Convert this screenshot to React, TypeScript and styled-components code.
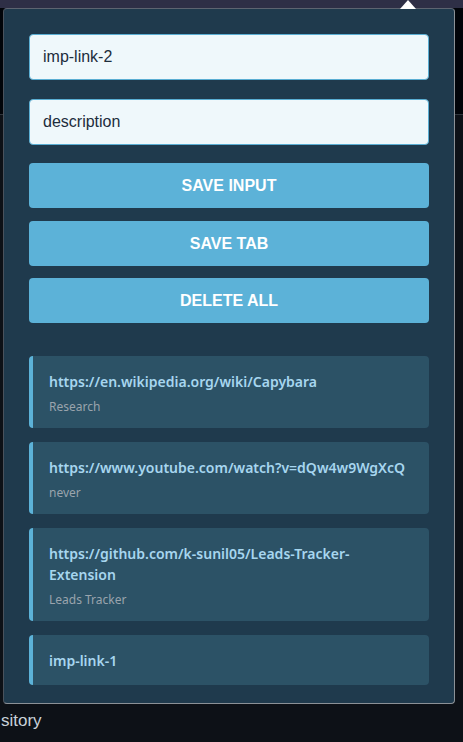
import React from "react";
import styled, { createGlobalStyle } from "styled-components";

const GlobalStyle = createGlobalStyle`
  html, body {
    margin: 0;
    padding: 0;
    background: #0d1117;
    overflow: hidden;
  }
  #root {
    width: 463px;
    height: 742px;
  }
`;

const Page = styled.div`
  position: relative;
  width: 463px;
  height: 742px;
  overflow: hidden;
  display: flex;
  flex-direction: column;
  background: #0d1117;
  font-family: "Liberation Sans", Arial, sans-serif;
`;

const BrowserBar = styled.div`
  height: 8px;
  background: #2e2f46;
  flex-shrink: 0;
`;

const SiteHeader = styled.div`
  height: 106px;
  background: #010409;
  border-bottom: 1px solid #30363d;
  flex-shrink: 0;
`;

const SiteBody = styled.div`
  flex: 1;
  display: flex;
  flex-direction: column;
  justify-content: flex-end;
  padding-bottom: 10px;
`;

const PageText = styled.div`
  margin-left: 1px;
  color: #c9d1d9;
  font-family: "Liberation Sans", Arial, sans-serif;
  font-size: 17px;
  line-height: 22px;
`;

const Popup = styled.div`
  position: absolute;
  top: 8px;
  left: 3px;
  width: 452px;
  box-sizing: border-box;
  background: #1f3a4d;
  border: 1px solid #8b9197;
  border-top-color: #5d6470;
  border-left-color: #4a525c;
  border-radius: 4px;
  padding: 25px 25px 18px;
  display: flex;
  flex-direction: column;

  & > * {
    flex-shrink: 0;
  }
`;

const Arrow = styled.div`
  position: absolute;
  top: -9px;
  left: 396px;
  width: 0;
  height: 0;
  border-left: 8px solid transparent;
  border-right: 8px solid transparent;
  border-bottom: 9px solid #ffffff;
`;

const Field = styled.input`
  box-sizing: border-box;
  width: 400px;
  height: 46px;
  margin: 0 0 19px;
  padding: 0 13px;
  background: #eff8fb;
  border: 1px solid #5aaed3;
  border-radius: 4px;
  color: #1d2d3c;
  font-family: "Liberation Sans", Arial, sans-serif;
  font-size: 16px;
  outline: none;
`;

const ButtonStack = styled.div`
  display: flex;
  flex-direction: column;
  gap: 13px;
  margin-top: -1px;

  & > :last-child {
    margin-top: -1px;
  }
`;

const ActionButton = styled.button`
  box-sizing: border-box;
  width: 400px;
  height: 45px;
  border: none;
  border-radius: 4px;
  background: #5cb2d8;
  color: #ffffff;
  font-family: "Liberation Sans", Arial, sans-serif;
  font-weight: 700;
  font-size: 16px;
  cursor: pointer;
`;

const LeadList = styled.ul`
  list-style: none;
  margin: 33px 0 0;
  padding: 0;
  display: flex;
  flex-direction: column;
  gap: 14px;
`;

const LeadItem = styled.li`
  box-sizing: border-box;
  width: 400px;
  background: #2c5266;
  border-left: 4px solid #5cb2d8;
  border-radius: 4px;
  padding: 15px 16px 14px;
  font-family: "Noto Sans", "Open Sans", sans-serif;
`;

const LeadLink = styled.a`
  display: block;
  color: #a7d6ef;
  font-weight: 600;
  font-size: 14px;
  line-height: 21px;
  text-decoration: none;
`;

const LeadNote = styled.div`
  margin-top: 7px;
  color: #9aa4ad;
  font-size: 12px;
  line-height: 15px;
`;

const leads = [
  { url: "https://en.wikipedia.org/wiki/Capybara", note: "Research" },
  { url: "https://www.youtube.com/watch?v=dQw4w9WgXcQ", note: "never" },
  {
    url: "https://github.com/k-sunil05/Leads-Tracker-Extension",
    note: "Leads Tracker",
  },
  { url: "imp-link-1", note: "" },
];

export default function App() {
  return (
    <>
      <GlobalStyle />
      <Page>
        <BrowserBar />
        <SiteHeader />
        <SiteBody>
          <PageText>sitory</PageText>
        </SiteBody>
        <Popup>
          <Arrow />
          <Field defaultValue="imp-link-2" />
          <Field defaultValue="description" />
          <ButtonStack>
            <ActionButton>SAVE INPUT</ActionButton>
            <ActionButton>SAVE TAB</ActionButton>
            <ActionButton>DELETE ALL</ActionButton>
          </ButtonStack>
          <LeadList>
            {leads.map((lead) => (
              <LeadItem key={lead.url}>
                <LeadLink href="#">{lead.url}</LeadLink>
                {lead.note && <LeadNote>{lead.note}</LeadNote>}
              </LeadItem>
            ))}
          </LeadList>
        </Popup>
      </Page>
    </>
  );
}
